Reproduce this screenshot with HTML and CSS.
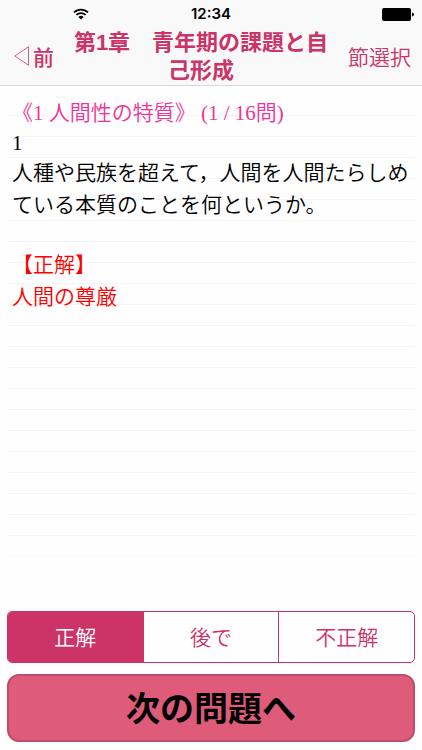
FILE: index.html
```
<!DOCTYPE html>
<html lang="ja">
<head>
    <meta charset="UTF-8">
    <meta name="viewport" content="width=device-width, initial-scale=1.0">
    <title>第1章　青年期の課題と自己形成</title>
    <link rel="stylesheet" href="styles.css">
</head>
<body>
    <header class="header">
        <div class="status-bar">
            <svg class="wifi" viewBox="0 0 16 12" aria-hidden="true">
                <path d="M1 4.4a10 10 0 0 1 14 0M3.4 6.9a6.6 6.6 0 0 1 9.2 0" fill="none" stroke="#000" stroke-width="1.8"/>
                <path d="M5.4 8.9a3.8 3.8 0 0 1 5.2 0L8 11.6z"/>
            </svg>
            <span class="clock">12:34</span>
            <svg class="battery" viewBox="0 0 32 13" aria-hidden="true">
                <rect x="0" y="0" width="29" height="13" rx="2"/>
                <path d="M30 4.5q2 .5 2 2t-2 2z"/>
            </svg>
        </div>
        <nav class="nav-bar">
            <button type="button" class="nav-button back">
                <svg class="back-icon" viewBox="0 0 15 20" aria-hidden="true">
                    <path d="M14.5 .8v18.4L.8 10z" fill="none" stroke="currentColor" stroke-width="0.8"/>
                </svg>前
            </button>
            <h1 class="title">第1章　青年期の課題と自己形成</h1>
            <button type="button" class="nav-button select">節選択</button>
        </nav>
    </header>
    <main class="main">
        <div class="question">
            <p class="section">《1 人間性の特質》 (1 / 16問)</p>
            <p class="number">1</p>
            <p class="text">人種や民族を超えて，人間を人間たらしめている本質のことを何というか。</p>
            <h2 class="answer-label">【正解】</h2>
            <p class="answer">人間の尊厳</p>
        </div>
        <form class="result">
            <label class="choice"><input type="radio" name="result" value="correct" checked><span>正解</span></label>
            <label class="choice"><input type="radio" name="result" value="later"><span>後で</span></label>
            <label class="choice"><input type="radio" name="result" value="wrong"><span>不正解</span></label>
        </form>
        <button type="button" class="next">次の問題へ</button>
    </main>
</body>
</html>
```

FILE: styles.css
```
* {
    box-sizing: border-box;
}
body {
    display: flex;
    flex-direction: column;
    min-height: 100vh;
    margin: 0;
    background: #fefefe;
    font-family: "Liberation Sans", "Noto Sans CJK JP", sans-serif;
}
button {
    padding: 0;
    border: none;
    font-family: inherit;
    cursor: pointer;
}
h1, h2, p {
    margin: 0;
    font-size: inherit;
    font-weight: inherit;
}

/* ヘッダー */
.header {
    background: #f9f9f9;
    border-bottom: 1px solid #d8d8d8;
}
.status-bar {
    display: grid;
    grid-template-columns: 1fr auto 1fr;
    align-items: center;
    height: 26px;
    padding: 2px 8px 0;
}
.wifi {
    width: 16px;
    height: 12px;
    margin-left: 65px;
}
.clock {
    font-family: Inter, "Liberation Sans", sans-serif;
    font-size: 15px;
    font-weight: 600;
    line-height: 24px;
}
.battery {
    width: 32px;
    height: 13px;
    justify-self: end;
}
.nav-bar {
    display: flex;
    align-items: center;
    justify-content: space-between;
    gap: 12px;
    padding: 0 11px 0 14px;
}
.nav-button {
    display: flex;
    align-items: center;
    flex: none;
    background: none;
    color: #cc3366;
    font-size: 21px;
    line-height: 28px;
}
.back {
    gap: 4px;
    font-family: "Noto Sans CJK JP", sans-serif;
    font-weight: 500;
}
.back-icon {
    width: 15px;
    height: 20px;
}
.select {
    font-family: "Noto Sans CJK JP", sans-serif;
    font-weight: 350;
}
.title {
    flex: 1;
    padding-top: 3px;
    color: #cc3366;
    font-family: "Liberation Sans", "Noto Sans CJK JP", sans-serif;
    font-size: 22px;
    font-weight: 700;
    line-height: 28px;
    text-align: center;
}

/* 問題 */
.main {
    display: flex;
    flex: 1;
    flex-direction: column;
    padding: 8px 7px;
}
.question {
    flex: 1;
    padding: 3px 4px 0 5px;
    background: linear-gradient(#fefefe00 440px, #fefefe 475px), repeating-linear-gradient(#fefefe00 0 20px, #f4f4f4 20px 21px) 0 1px;
    font-family: "Liberation Serif", "Noto Sans CJK JP", serif;
    font-size: 21px;
    font-weight: 350;
    line-height: 32px;
}
.section {
    color: #ee3399;
}
.number {
    line-height: 28px;
}
.answer-label {
    margin-top: 28px;
}
.answer-label, .answer {
    color: #ff0000;
}

/* 判定 */
.result {
    display: flex;
    height: 52px;
    margin-bottom: 11px;
    border: 1px solid #cc3366;
    border-radius: 5px;
    overflow: hidden;
}
.choice {
    display: flex;
    flex: 1;
    cursor: pointer;
}
.choice + .choice {
    border-left: 1px solid #cc3366;
}
.choice input {
    position: absolute;
    opacity: 0;
}
.choice span {
    flex: 1;
    color: #cc3366;
    font-family: "Noto Sans CJK JP", sans-serif;
    font-size: 21px;
    font-weight: 350;
    line-height: 48px;
    text-align: center;
}
.choice input:checked + span {
    background: #cc3366;
    color: #fff;
}
.next {
    height: 68px;
    padding-bottom: 3px;
    border: 2px solid #c04c6a;
    border-radius: 12px;
    background: #de5c7a;
    color: #000;
    font-family: "Noto Sans CJK JP", sans-serif;
    font-size: 34px;
    font-weight: 700;
}
```
